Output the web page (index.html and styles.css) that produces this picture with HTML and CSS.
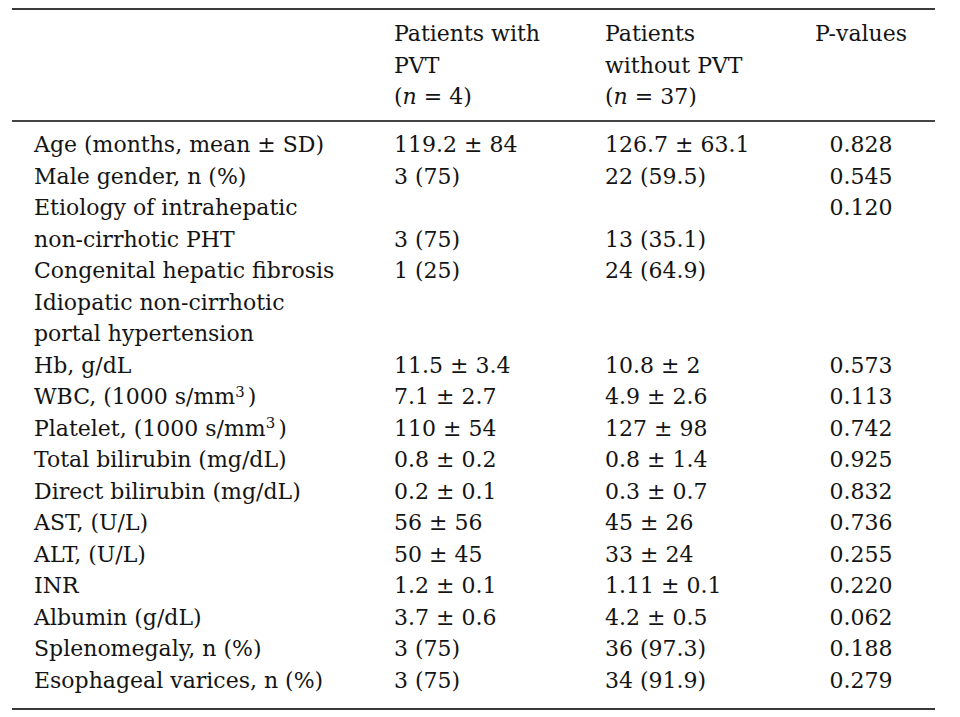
FILE: index.html
```html
<!DOCTYPE html>
<html lang="en">
<head>
<meta charset="utf-8">
<title>Table</title>
<link rel="stylesheet" href="styles.css">
</head>
<body>
<table class="data">
  <colgroup>
    <col class="w1"><col class="w2"><col class="w3"><col class="w4">
  </colgroup>
  <thead>
    <tr>
      <th class="label"></th>
      <th>Patients with<br>PVT<br>(<i>n</i> = 4)</th>
      <th>Patients<br>without PVT<br>(<i>n</i> = 37)</th>
      <th class="p">P-values</th>
    </tr>
  </thead>
  <tbody>
    <tr class="first"><td class="label">Age (months, mean ± SD)</td><td>119.2 ± 84</td><td>126.7 ± 63.1</td><td class="p">0.828</td></tr>
    <tr><td class="label">Male gender, n (%)</td><td>3 (75)</td><td>22 (59.5)</td><td class="p">0.545</td></tr>
    <tr><td class="label">Etiology of intrahepatic</td><td></td><td></td><td class="p">0.120</td></tr>
    <tr><td class="label">non-cirrhotic PHT</td><td>3 (75)</td><td>13 (35.1)</td><td class="p"></td></tr>
    <tr><td class="label">Congenital hepatic fibrosis</td><td>1 (25)</td><td>24 (64.9)</td><td class="p"></td></tr>
    <tr><td class="label">Idiopatic non-cirrhotic</td><td></td><td></td><td class="p"></td></tr>
    <tr><td class="label">portal hypertension</td><td></td><td></td><td class="p"></td></tr>
    <tr><td class="label">Hb, g/dL</td><td>11.5 ± 3.4</td><td>10.8 ± 2</td><td class="p">0.573</td></tr>
    <tr><td class="label">WBC, (1000 s/mm<sup>3</sup>)</td><td>7.1 ± 2.7</td><td>4.9 ± 2.6</td><td class="p">0.113</td></tr>
    <tr><td class="label">Platelet, (1000 s/mm<sup>3</sup>)</td><td>110 ± 54</td><td>127 ± 98</td><td class="p">0.742</td></tr>
    <tr><td class="label">Total bilirubin (mg/dL)</td><td>0.8 ± 0.2</td><td>0.8 ± 1.4</td><td class="p">0.925</td></tr>
    <tr><td class="label">Direct bilirubin (mg/dL)</td><td>0.2 ± 0.1</td><td>0.3 ± 0.7</td><td class="p">0.832</td></tr>
    <tr><td class="label">AST, (U/L)</td><td>56 ± 56</td><td>45 ± 26</td><td class="p">0.736</td></tr>
    <tr><td class="label">ALT, (U/L)</td><td>50 ± 45</td><td>33 ± 24</td><td class="p">0.255</td></tr>
    <tr><td class="label">INR</td><td>1.2 ± 0.1</td><td>1.11 ± 0.1</td><td class="p">0.220</td></tr>
    <tr><td class="label">Albumin (g/dL)</td><td>3.7 ± 0.6</td><td>4.2 ± 0.5</td><td class="p">0.062</td></tr>
    <tr><td class="label">Splenomegaly, n (%)</td><td>3 (75)</td><td>36 (97.3)</td><td class="p">0.188</td></tr>
    <tr class="last"><td class="label">Esophageal varices, n (%)</td><td>3 (75)</td><td>34 (91.9)</td><td class="p">0.279</td></tr>
  </tbody>
</table>
</body>
</html>
```
FILE: styles.css
```css
html, body {
  margin: 0;
  padding: 0;
  background: #ffffff;
}
body {
  padding-top: 8px;
}
.data {
  margin-left: 12px;
  width: 923px;
  border-collapse: collapse;
  table-layout: fixed;
  font-family: "DejaVu Serif", serif;
  font-size: 22px;
  line-height: 31.5px;
  color: #141414;
  border-top: 2px solid #3a3a3a;
  border-bottom: 2px solid #3a3a3a;
}
.w1 { width: 382px; }
.w2 { width: 211px; }
.w3 { width: 182px; }
.w4 { width: 148px; }
.data th,
.data td {
  padding: 0;
  text-align: left;
  vertical-align: top;
  font-weight: normal;
  white-space: nowrap;
}
.data thead th {
  padding-top: 8px;
  padding-bottom: 7.5px;
  border-bottom: 2px solid #444444;
}
.data .label {
  padding-left: 22px;
}
.data .p {
  text-align: center;
}
.data tr.first td {
  padding-top: 7px;
}
.data tr.last td {
  padding-bottom: 12px;
}
.data i {
  font-style: italic;
}
.data sup {
  font-size: 0.68em;
  line-height: 0;
  vertical-align: 0.5em;
  margin-right: 3px;
}
```
